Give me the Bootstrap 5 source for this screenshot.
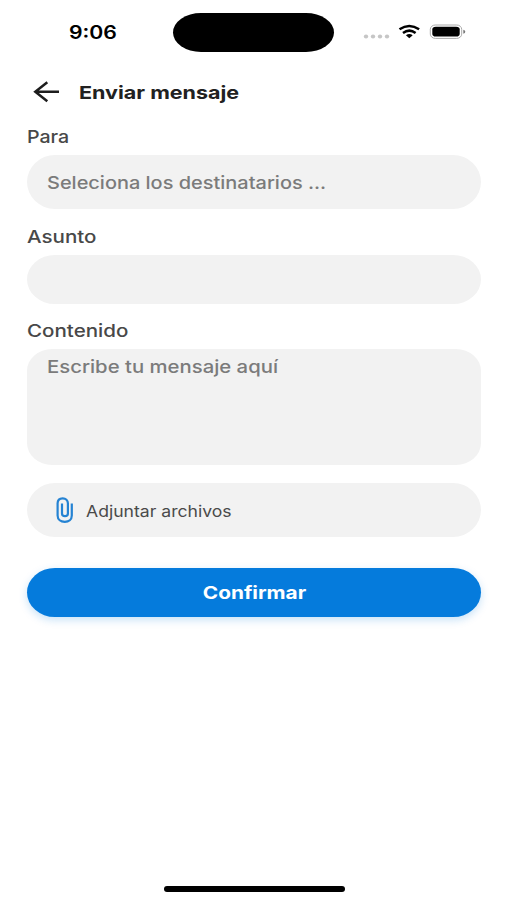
<!DOCTYPE html>
<html lang="es">
<head>
<meta charset="utf-8">
<meta name="viewport" content="width=device-width, initial-scale=1">
<title>Enviar mensaje</title>
<link href="https://cdn.jsdelivr.net/npm/bootstrap@5.3.0/dist/css/bootstrap.min.css" rel="stylesheet">
<style>
body{font-family:Inter,"Liberation Sans",sans-serif;background:#fff;color:#212121;height:900px;overflow:hidden}
/* wide lettering: each label is stretched from its left edge */
.wide{display:inline-block;white-space:nowrap;transform:translateY(.7px) scaleX(var(--w,1.175));transform-origin:0 50%}
.status{height:64px;padding-left:69px}
.clock{width:104px;font-size:18px;font-weight:600;color:#000;line-height:24px;--w:1.18}
.island{width:161px;height:39px;border-radius:28px/50%;background:#000}
.topbar{height:56px;padding:0 0 0 32px;gap:17px}
.topbar h1{font-size:18px;font-weight:700;line-height:24px;--w:1.195}
.form-area{padding:4px 26px 0 27px}
.field-label{height:24px;line-height:24px;font-size:17.5px;font-weight:500;color:#484848}
.field-box{background:#f2f2f2;border-radius:28px/50%;font-size:17.5px;font-weight:500;color:#7b7b7b;padding-left:20px}
.label-to{--w:1.12}
.recipients{--w:1.14}
.area-box{border-radius:25px/22px;line-height:24px;padding-top:5px;--w:1.16}
.attach{font-size:16px;font-weight:400;color:#4a4a4a;padding-left:28px;gap:12px;--w:1.1}
.confirm{height:49px;border:0;border-radius:28px/50%;background:#057bdc;color:#fff;font-size:17.5px;font-weight:700;box-shadow:0 3px 9px rgba(5,123,220,.22);--w:1.19}
.confirm .wide{transform-origin:50% 50%}
.home-bar{width:181px;height:6px;border-radius:3px;background:#000;margin:0 0 8px 164px}
</style>
</head>
<body class="d-flex flex-column">
<header class="status d-flex align-items-center flex-shrink-0">
  <div class="clock"><span class="wide">9:06</span></div>
  <div class="island"></div>
  <svg class="ms-4" width="112" height="24" viewBox="358 20 112 24" aria-hidden="true">
    <g fill="#c6c6c6"><ellipse cx="366" cy="36.4" rx="2.2" ry="2"/><ellipse cx="373" cy="36.4" rx="2.2" ry="2"/><ellipse cx="380" cy="36.4" rx="2.2" ry="2"/><ellipse cx="387" cy="36.4" rx="2.2" ry="2"/></g>
    <g fill="none" stroke="#000" stroke-width="2.5"><path d="M399.5 29.3Q409.300 22.700 419.100 29.300"/><path d="M403 33Q409.300 28.300 415.600 33"/></g>
    <path d="M405.900 35.300Q409.300 32.900 412.700 35.300L409.300 38.300z"/>
    <rect x="430.300" y="25" width="31.400" height="13.400" rx="5" ry="4.300" fill="#fff" stroke="#aaa" stroke-width="1"/>
    <rect x="432.300" y="26.800" width="27.400" height="9.800" rx="3.500" ry="2.800"/>
    <path d="M463.300 29.800q2 .6 2 2t-2 2z" fill="#777"/>
  </svg>
</header>
<nav class="topbar d-flex align-items-center flex-shrink-0">
  <svg width="30" height="24" viewBox="32 80 30 24" fill="none" stroke="#1d1d1d" stroke-width="2.5" aria-hidden="true"><path d="M59 91.700H35.500M47.300 82.200L35.300 91.700L47.300 101.200"/></svg>
  <h1 class="mb-0"><span class="wide">Enviar mensaje</span></h1>
</nav>
<main class="form-area flex-grow-1">
  <div class="field-label label-to"><span class="wide">Para</span></div>
  <div class="field-box recipients d-flex align-items-center" style="height:54px;margin-top:7px"><span class="wide">Seleciona los destinatarios ...</span></div>
  <div class="field-label" style="margin-top:15px"><span class="wide">Asunto</span></div>
  <div class="field-box" style="height:49px;margin-top:7px"></div>
  <div class="field-label" style="margin-top:14px"><span class="wide">Contenido</span></div>
  <div class="field-box area-box" style="height:116px;margin-top:7px"><span class="wide">Escribe tu mensaje aquí</span></div>
  <div class="field-box attach d-flex align-items-center" style="height:54px;margin-top:18px">
    <svg width="19" height="28" viewBox="55 496 19 28" fill="none" stroke="#2583d3" stroke-width="2.2" stroke-linecap="butt" aria-hidden="true"><path d="M71.800 503.500V515.500C71.800 519.500 68.800 521.800 64.800 521.800S57.600 519.500 57.600 515.500V503.300C57.600 500.300 59.600 498.300 62.700 498.300S67.900 500.300 67.900 503.300V513.500C67.900 515.200 66.700 516.200 65 516.200S62 515.200 62 513.500V503.500"/></svg>
    <span class="wide">Adjuntar archivos</span>
  </div>
  <button type="button" class="confirm btn w-100 p-0" style="margin-top:31px"><span class="wide">Confirmar</span></button>
</main>
<div class="home-bar flex-shrink-0"></div>
<script src="https://cdn.jsdelivr.net/npm/bootstrap@5.3.0/dist/js/bootstrap.bundle.min.js"></script>
</body>
</html>
